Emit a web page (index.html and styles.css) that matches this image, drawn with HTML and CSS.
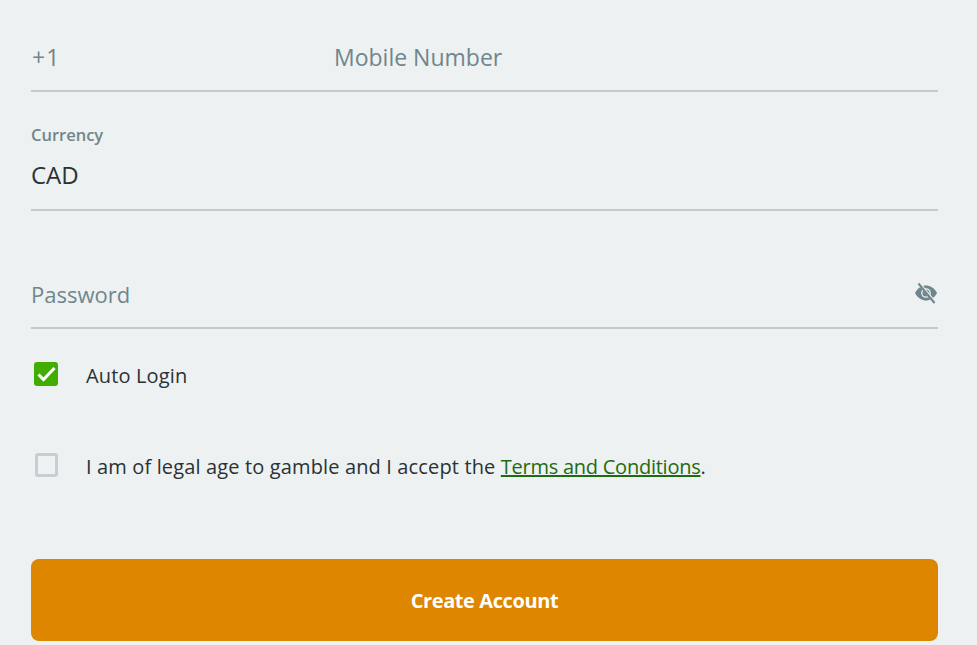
FILE: index.html
```html
<html>

<head>
    <meta charset="UTF-8">
    <meta name="viewport" content="width=device-width, initial-scale=1.0">
    <title>Create Account</title>
    <link rel="stylesheet" href="styles.css">
</head>

<body>
    <form class="signup-form">
        <div class="field phone-field">
            <span class="phone-code">+1</span>
            <span class="placeholder">Mobile Number</span>
        </div>
        <div class="field currency-field">
            <label class="field-label">Currency</label>
            <span class="field-value">CAD</span>
        </div>
        <div class="field password-field">
            <span class="placeholder">Password</span>
            <svg class="eye-icon" viewBox="0 0 24 24" width="24" height="24">
                <path fill="#6f868c" d="M1 12C4 6.500 8 4.500 12 4.500s8 2 11 7.500c-3 5.500-7 7.500-11 7.500S4 17.500 1 12z"/>
                <circle cx="12" cy="12" r="4.200" fill="none" stroke="#edf1f2" stroke-width="1.300"/>
                <path fill="none" stroke="#edf1f2" stroke-width="3" d="M6 3.500l15 18"/>
                <path fill="none" stroke="#6f868c" stroke-width="2" d="M4.500 2.500l16 19.500"/>
            </svg>
        </div>
        <div class="check-row auto-login">
            <span class="checkbox checked">
                <svg viewBox="0 0 24 24" width="24" height="24">
                    <path fill="none" stroke="#fff" stroke-width="3" d="M4.500 12.500l5 5L20.500 6"/>
                </svg>
            </span>
            <span class="check-text">Auto Login</span>
        </div>
        <div class="check-row legal-age">
            <span class="checkbox"></span>
            <span class="check-text">I am of legal age to gamble and I accept the <a href="#">Terms and Conditions</a>.</span>
        </div>
        <button type="button" class="submit-btn">Create Account</button>
    </form>
</body>

</html>
```

FILE: styles.css
```css
html,
body {
    height: 100%;
    overflow: hidden;
}

body {
    font-family: "Open Sans", "Noto Sans", Arial, sans-serif;
    background-color: #edf1f2;
    color: #2a3235;
    margin: 0;
}

.signup-form {
    display: flex;
    flex-direction: column;
    padding: 0 39px 0 31px;
}

.field {
    border-bottom: 2px solid #bfcbd1;
    display: flex;
    font-size: 22px;
    box-sizing: border-box;
}

.placeholder {
    color: #6f868c;
}

.phone-field {
    align-items: center;
    font-size: 23px;
    height: 92px;
    padding-top: 32px;
    padding-bottom: 8px;
}

.phone-code {
    color: #6f868c;
    letter-spacing: 1px;
    padding-left: 1px;
    width: 302px;
}

.currency-field {
    flex-direction: column;
    height: 119px;
    padding-top: 31px;
}

.field-label {
    color: #6f868c;
    font-size: 16.5px;
    font-weight: 600;
    line-height: 24px;
}

.field-value {
    font-size: 24px;
    line-height: 36px;
    margin-top: 10px;
}

.password-field {
    align-items: center;
    justify-content: space-between;
    height: 118px;
    padding-top: 50px;
}

.eye-icon {
    margin-top: -2px;
}

.check-row {
    align-items: center;
    display: flex;
    font-size: 20px;
}

.auto-login {
    margin-top: 33px;
}

.legal-age {
    margin-top: 63px;
}

.checkbox {
    align-items: center;
    border: 3px solid #c5ced3;
    border-radius: 3px;
    box-sizing: border-box;
    display: flex;
    height: 24px;
    justify-content: center;
    margin-left: 4px;
    margin-top: -5px;
    width: 23px;
}

.checkbox.checked {
    background: #41ad00;
    border: none;
    margin-left: 3px;
    width: 24px;
}

.check-text {
    letter-spacing: 0.14px;
    line-height: 28px;
    margin-left: 28px;
}

.check-text a {
    color: #1f6b12;
    letter-spacing: -0.25px;
}

.submit-btn {
    background: #de8600;
    border: none;
    border-radius: 8px;
    color: #fff;
    font-family: inherit;
    font-size: 20px;
    font-weight: 700;
    height: 82px;
    letter-spacing: -0.4px;
    margin-top: 78px;
    padding-top: 2px;
}
```
